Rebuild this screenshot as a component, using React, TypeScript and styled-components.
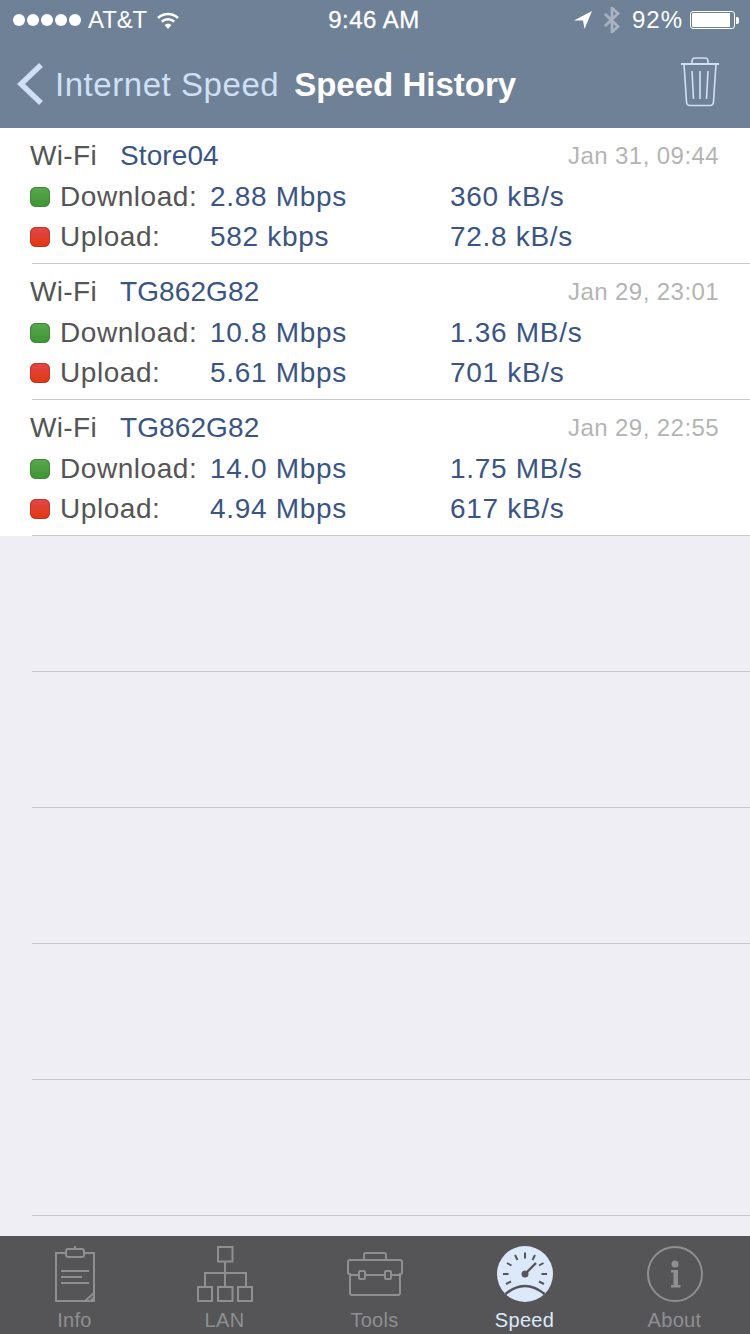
import React from "react";
import styled, { createGlobalStyle } from "styled-components";

const Global = createGlobalStyle`
  html, body { margin: 0; padding: 0; background: #eeeef4; }
  body { font-family: "Liberation Sans", Arial, sans-serif; }
`;

const Page = styled.div`
  width: 750px;
  height: 1334px;
  display: flex;
  flex-direction: column;
  overflow: hidden;
  background: #eeeef4;
`;

const Header = styled.header`
  height: 128px;
  flex: none;
  background: #6e8197;
  color: #fff;
  display: flex;
  flex-direction: column;
`;

const StatusBar = styled.div`
  height: 40px;
  display: grid;
  grid-template-columns: 1fr auto 1fr;
  align-items: center;
  padding: 0 11px 0 13px;
  font-size: 24px;
`;

const StatusLeft = styled.div`
  display: flex;
  align-items: center;
`;

const StatusRight = styled.div`
  display: flex;
  align-items: center;
  justify-content: flex-end;
`;

const Dots = styled.div`
  display: flex;
  gap: 2px;
  margin-right: 7px;
`;

const Dot = styled.span`
  width: 12px;
  height: 12px;
  border-radius: 50%;
  background: #fff;
`;

const Carrier = styled.span`
  margin-right: 10px;
  letter-spacing: -0.1px;
`;

const Clock = styled.span`
  margin-right: 4px;
  letter-spacing: 0.5px;
  -webkit-text-stroke: 0.3px #fff;
`;

const Percent = styled.span`
  margin: 0 7px 0 12px;
  letter-spacing: 1px;
`;

const Battery = styled.div`
  width: 45px;
  height: 18px;
  box-sizing: border-box;
  border: 1px solid #fff;
  border-radius: 3px;
  padding: 1px;
  display: flex;
`;

const BatteryFill = styled.div`
  flex: 1;
  margin-right: 3px;
  background: #fff;
  border-radius: 1px;
`;

const BatteryTip = styled.div`
  width: 3px;
  height: 7px;
  margin-left: 1px;
  background: #fff;
  border-radius: 0 2px 2px 0;
`;

const NavBar = styled.nav`
  height: 88px;
  display: flex;
  align-items: center;
  padding: 0 31px 0 17px;
`;

const BackLabel = styled.span`
  margin: 2px 0 0 12px;
  font-size: 33px;
  color: #cfe0f5;
  letter-spacing: 0.55px;
`;

const Title = styled.span`
  margin: 2px 0 0 15px;
  font-size: 33px;
  font-weight: 700;
  color: #fff;
  flex: 1;
`;

const TrashSlot = styled.span`
  display: flex;
  margin-bottom: 5px;
`;

const List = styled.main`
  flex: 1;
  min-height: 0;
  overflow: hidden;
`;

const Row = styled.section`
  height: 136px;
  box-sizing: border-box;
  padding-top: 7px;
  background: #fff;
  position: relative;
`;

const EmptyRow = styled.div`
  height: 136px;
  position: relative;
`;

const RowLine = styled.div`
  position: absolute;
  left: 32px;
  right: 0;
  bottom: 0;
  height: 1px;
  background: #c8c8cc;
`;

const Line = styled.div`
  height: 40px;
  display: flex;
  align-items: center;
  padding-left: 30px;
  font-size: 28px;
  letter-spacing: 0.55px;
  color: #555;
  white-space: nowrap;
`;

const TopLine = styled(Line)`
  height: 42px;
`;

const Kind = styled.span`
  width: 90px;
  letter-spacing: 0.35px;
`;

const Network = styled.span`
  flex: 1;
  color: #3a5583;
  letter-spacing: 0.1px;
`;

const When = styled.span`
  width: 182px;
  font-size: 24px;
  letter-spacing: 0.43px;
  color: #b4b4b4;
`;

const Led = styled.span<{ $color: string; $shade: string; $edge: string }>`
  width: 20px;
  height: 20px;
  border-radius: 6px;
  margin-right: 10px;
  background: linear-gradient(${(p) => p.$color}, ${(p) => p.$shade});
  box-shadow: inset 0 0 0 1px ${(p) => p.$edge};
`;

const Label = styled.span`
  width: 150px;
`;

const Value = styled.span`
  width: 240px;
  color: #3a5583;
  letter-spacing: 0.7px;
`;

const TabBar = styled.footer`
  height: 98px;
  flex: none;
  background: #555558;
  display: grid;
  grid-template-columns: repeat(5, 150px);
`;

const Tab = styled.div<{ $active?: boolean }>`
  display: flex;
  flex-direction: column;
  align-items: center;
  padding: 10px 1px 0 0;
  color: ${(p) => (p.$active ? "#dce9fb" : "#8f8f91")};
  font-size: 20px;
  letter-spacing: 0.3px;
  svg { display: block; }
`;

const TabLabel = styled.span`
  margin-top: 6px;
  line-height: 24px;
`;

const WifiIcon = () => (
  <svg width="22" height="17" viewBox="0 0 22 17" fill="none" stroke="#fff" strokeWidth="2.6">
    <path d="M1 6a14.5 14.5 0 0 1 20 0" />
    <path d="M4.8 9.8a9 9 0 0 1 12.4 0" />
    <path d="M11 17 7.6 13a5 5 0 0 1 6.8 0z" fill="#fff" stroke="none" />
  </svg>
);

const ArrowIcon = () => (
  <svg width="18" height="18" viewBox="0 0 18 18" fill="#fff">
    <path d="M0 9.5 18 0 10.5 18 9 9.5z" />
  </svg>
);

const BluetoothIcon = () => (
  <svg width="16" height="26" viewBox="0 0 16 26" fill="none" stroke="#a9b3c0" strokeWidth="2.8" style={{ marginLeft: 12 }}>
    <path d="M1 7 14 19.5 8 25V1L14 6.5 1 19" />
  </svg>
);

const ChevronIcon = () => (
  <svg width="26" height="42" viewBox="0 0 26 42" fill="none" stroke="#cfe0f5" strokeWidth="5.5">
    <path d="M24 2 4 21l20 19" />
  </svg>
);

const TrashIcon = () => (
  <svg width="38" height="50" viewBox="0 0 38 50" fill="none" stroke="#cfe0f5" strokeWidth="1.6">
    <path d="M0 7h38" strokeWidth="2" />
    <path d="M11 6V4a3 3 0 0 1 3-3h10a3 3 0 0 1 3 3v2" />
    <path d="M3 7l2.500 38a3.500 3.500 0 0 0 3.500 3.500h20a3.500 3.500 0 0 0 3.500-3.500L35 7" />
    <path d="M11 14l1.500 28M19 14v28M27 14l-1.500 28" />
  </svg>
);

const InfoIcon = () => (
  <svg width="40" height="56" viewBox="0 0 40 56" fill="none" stroke="currentColor" strokeWidth="2">
    <path d="M11 7H1v48h38V7H29" />
    <rect x="11" y="3" width="18" height="8" rx="2" />
    <path d="M20 3V0M6 25h28M6 31h21M6 37h28" />
    <path d="M30 55l9-8" />
    <path d="M34 55l5-5v5z" fill="currentColor" stroke="none" />
  </svg>
);

const LanIcon = () => (
  <svg width="56" height="56" viewBox="0 0 56 56" fill="none" stroke="currentColor" strokeWidth="2">
    <rect x="21" y="1" width="14.500" height="14.500" />
    <path d="M28 16v24M8 40V27h41v13" />
    <rect x="1" y="41" width="14" height="14" />
    <rect x="21" y="41" width="14.500" height="14" />
    <rect x="41" y="41" width="14" height="14" />
  </svg>
);

const ToolsIcon = () => (
  <svg width="56" height="56" viewBox="0 0 56 56" fill="none" stroke="currentColor" strokeWidth="2">
    <path d="M17 14V9a2 2 0 0 1 2-2h18a2 2 0 0 1 2 2v5" />
    <path d="M3 29 1 27V16a2 2 0 0 1 2-2h50a2 2 0 0 1 2 2v11l-2 2" />
    <path d="M3 27v20a2 2 0 0 0 2 2h46a2 2 0 0 0 2-2V27" />
    <path d="M12 29H3M44 29h9M18 29h20" />
    <rect x="12" y="25" width="6" height="8" rx="1" />
    <rect x="38" y="25" width="6" height="8" rx="1" />
  </svg>
);

const SpeedIcon = () => (
  <svg width="56" height="56" viewBox="0 0 56 56">
    <circle cx="28" cy="28" r="28" fill="currentColor" />
    <path d="M8.500 48Q28 32 47.500 48" fill="none" stroke="#555558" strokeWidth="2.500" />
    <g stroke="#555558" strokeWidth="2" fill="none">
      <path d="M28 6.500v6M18 9l2.500 5M38 9l-2.500 5M10 17l4.500 2.500M46.500 17 42 19.500M6 28h5.500M44.500 28H50M9 38l5-2.500M47 38l-5-2.500" />
      <path d="M28 28 39 17" strokeWidth="2.400" />
    </g>
    <circle cx="28" cy="28" r="3.500" fill="#555558" />
  </svg>
);

const AboutIcon = () => (
  <svg width="56" height="56" viewBox="0 0 56 56" fill="none">
    <circle cx="28" cy="28" r="27" stroke="currentColor" strokeWidth="2" />
    <circle cx="28" cy="18" r="3.500" fill="currentColor" />
    <path d="M24 24h7v15h2.500v2.500h-9.500V39h2.500V26.500H24z" fill="currentColor" />
  </svg>
);

type Result = {
  name: string;
  date: string;
  down: [string, string];
  up: [string, string];
};

const results: Result[] = [
  { name: "Store04", date: "Jan 31, 09:44", down: ["2.88 Mbps", "360 kB/s"], up: ["582 kbps", "72.8 kB/s"] },
  { name: "TG862G82", date: "Jan 29, 23:01", down: ["10.8 Mbps", "1.36 MB/s"], up: ["5.61 Mbps", "701 kB/s"] },
  { name: "TG862G82", date: "Jan 29, 22:55", down: ["14.0 Mbps", "1.75 MB/s"], up: ["4.94 Mbps", "617 kB/s"] },
];

const tabs = [
  { label: "Info", icon: <InfoIcon /> },
  { label: "LAN", icon: <LanIcon /> },
  { label: "Tools", icon: <ToolsIcon /> },
  { label: "Speed", icon: <SpeedIcon />, active: true },
  { label: "About", icon: <AboutIcon /> },
];

export default function App() {
  return (
    <Page>
      <Global />
      <Header>
        <StatusBar>
          <StatusLeft>
            <Dots>
              {[0, 1, 2, 3, 4].map((i) => (
                <Dot key={i} />
              ))}
            </Dots>
            <Carrier>AT&amp;T</Carrier>
            <WifiIcon />
          </StatusLeft>
          <Clock>9:46 AM</Clock>
          <StatusRight>
            <ArrowIcon />
            <BluetoothIcon />
            <Percent>92%</Percent>
            <Battery>
              <BatteryFill />
            </Battery>
            <BatteryTip />
          </StatusRight>
        </StatusBar>
        <NavBar>
          <ChevronIcon />
          <BackLabel>Internet Speed</BackLabel>
          <Title>Speed History</Title>
          <TrashSlot>
            <TrashIcon />
          </TrashSlot>
        </NavBar>
      </Header>
      <List>
        {results.map((r, i) => (
          <Row key={i}>
            <TopLine>
              <Kind>Wi-Fi</Kind>
              <Network>{r.name}</Network>
              <When>{r.date}</When>
            </TopLine>
            <Line>
              <Led $color="#5aa84e" $shade="#3f9434" $edge="#3c8a34" />
              <Label>Download:</Label>
              <Value>{r.down[0]}</Value>
              <Value>{r.down[1]}</Value>
            </Line>
            <Line>
              <Led $color="#e2474c" $shade="#e0390f" $edge="#c83020" />
              <Label>Upload:</Label>
              <Value>{r.up[0]}</Value>
              <Value>{r.up[1]}</Value>
            </Line>
            <RowLine />
          </Row>
        ))}
        {[0, 1, 2, 3, 4].map((i) => (
          <EmptyRow key={i}>
            <RowLine />
          </EmptyRow>
        ))}
      </List>
      <TabBar>
        {tabs.map((t) => (
          <Tab key={t.label} $active={t.active}>
            {t.icon}
            <TabLabel>{t.label}</TabLabel>
          </Tab>
        ))}
      </TabBar>
    </Page>
  );
}
